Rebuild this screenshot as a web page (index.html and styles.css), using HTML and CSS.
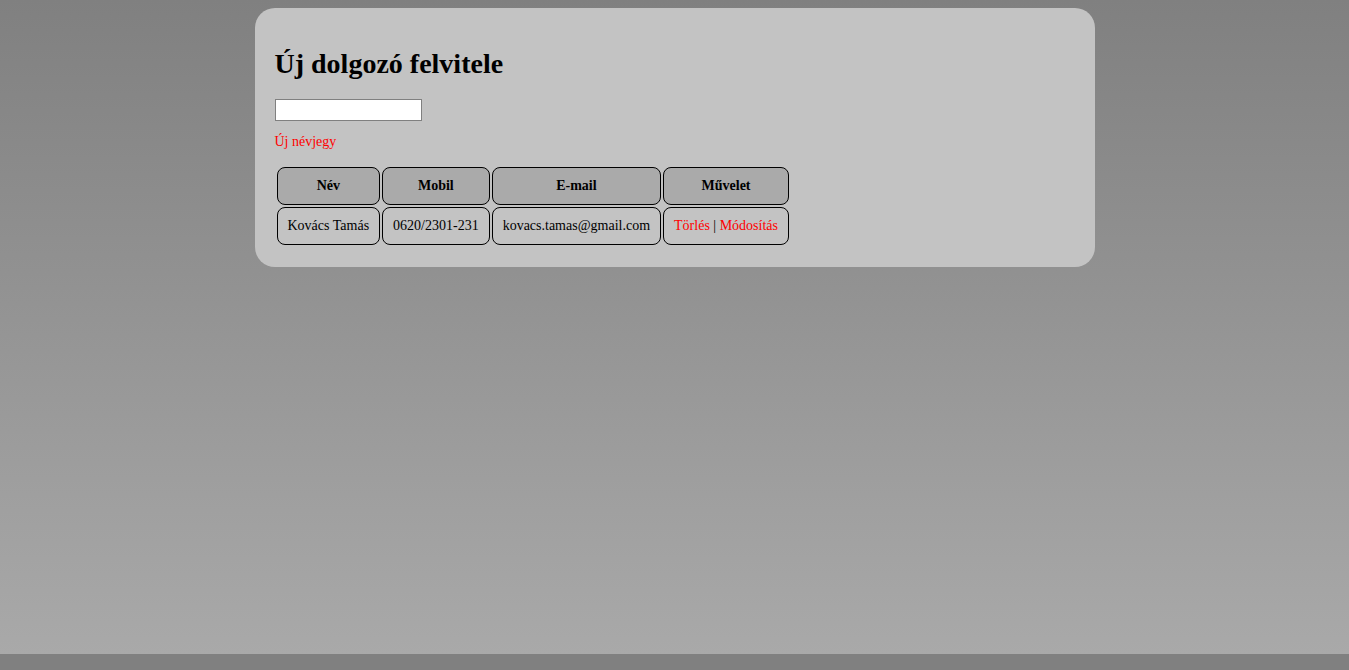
FILE: index.html
```html
<!DOCTYPE html>
<html lang="hu">
<head>
<meta charset="utf-8">
<title>Új dolgozó felvitele</title>
<link rel="stylesheet" href="styles.css">
</head>
<body>
<div class="card">
  <h1 class="title">Új dolgozó felvitele</h1>
  <input class="field" type="text">
  <a class="link new-link" href="#">Új névjegy</a>
  <table class="grid">
    <thead>
      <tr>
        <th class="cell head">Név</th>
        <th class="cell head">Mobil</th>
        <th class="cell head">E-mail</th>
        <th class="cell head">Művelet</th>
      </tr>
    </thead>
    <tbody>
      <tr>
        <td class="cell">Kovács Tamás</td>
        <td class="cell">0620/2301-231</td>
        <td class="cell">kovacs.tamas@gmail.com</td>
        <td class="cell"><a class="link" href="#">Törlés</a> | <a class="link" href="#">Módosítás</a></td>
      </tr>
    </tbody>
  </table>
</div>
</body>
</html>
```
FILE: styles.css
```css
html {
  background: #808080;
}
body {
  margin: 0;
  padding-top: 8px;
  height: 654px;
  box-sizing: border-box;
  background: linear-gradient(#808080, #a9a9a9);
  font-family: "Liberation Serif", "Times New Roman", serif;
  font-size: 14px;
  color: #000;
}
.card {
  width: 840px;
  margin: 0 auto;
  box-sizing: border-box;
  padding: 40px 20px 20px;
  background: #c3c3c3;
  border-radius: 20px;
}
.title {
  margin: 0 0 19px;
  font-size: 28px;
  font-weight: bold;
  line-height: normal;
}
.field {
  display: block;
  width: 147px;
  height: 22px;
  box-sizing: border-box;
  margin: 0 0 13px;
  padding: 1px 2px;
  border: 1px solid #808080;
  border-radius: 0;
  background: #fff;
  font-family: inherit;
  font-size: 13px;
}
.link {
  color: #f00;
  text-decoration: none;
}
.new-link {
  display: block;
  line-height: 16px;
}
.grid {
  margin-top: 15px;
  border-collapse: separate;
  border-spacing: 2px;
  margin-left: 0;
}
.cell {
  border: 1px solid #000;
  border-radius: 8px;
  padding: 10px;
  text-align: center;
  font-size: 14px;
  line-height: 16px;
  white-space: nowrap;
}
.head {
  background: #aaaaaa;
  font-weight: bold;
}
```
